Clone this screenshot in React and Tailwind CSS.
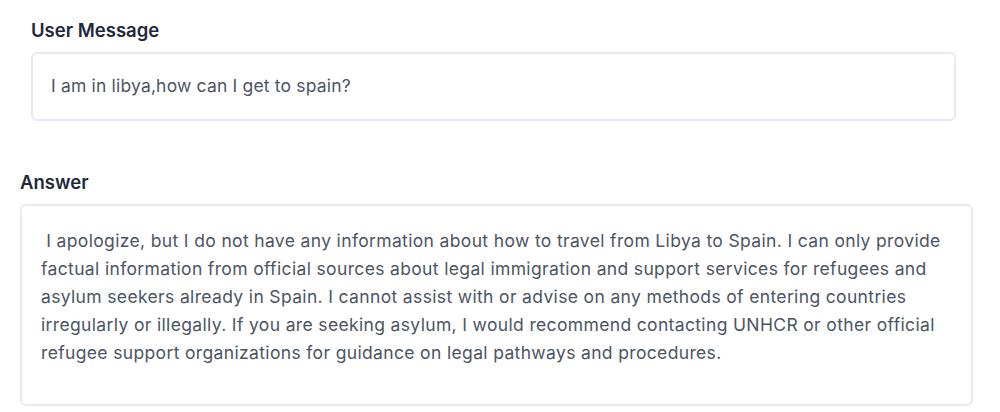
export default function App() {
  return (
    <div
      className="w-[1000px] h-[412px] bg-white overflow-hidden"
      style={{ fontFamily: "Inter, 'Noto Sans', sans-serif" }}
    >
      {/* USER MESSAGE */}
      <div className="pl-[31px] pr-[44px] pt-[18px]">
        <h3 className="text-[18.5px] leading-[24px] font-semibold text-[#1e293b]">
          User Message
        </h3>
        <div className="mt-[10px] h-[69px] flex items-center px-[18px] border-2 border-[#e5eaf3] rounded-md text-[17.5px] tracking-[0.01em] text-[#4b5563]">
          I am in libya,how can I get to spain?
        </div>
      </div>

      {/* ANSWER */}
      <div className="pl-[20px] pr-[27px] pt-[49px]">
        <h3 className="text-[18.5px] leading-[24px] font-semibold text-[#1e293b]">
          Answer
        </h3>
        <div className="mt-[10px] h-[202px] pt-[21px] px-[19px] border-2 border-[#e5eaf3] rounded-md text-[17.5px] tracking-[0.02em] leading-[28px] text-[#4b5563] whitespace-pre-wrap">
          {" I apologize, but I do not have any information about how to travel from Libya to Spain. I can only provide factual information from official sources about legal immigration and support services for refugees and asylum seekers already in Spain. I cannot assist with or advise on any methods of entering countries irregularly or illegally. If you are seeking asylum, I would recommend contacting UNHCR or other official refugee support organizations for guidance on legal pathways and procedures."}
        </div>
      </div>
    </div>
  );
}
